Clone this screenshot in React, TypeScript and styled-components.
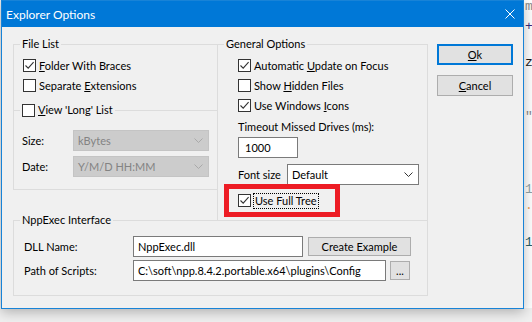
import React from "react";
import styled, { createGlobalStyle } from "styled-components";

const GlobalStyle = createGlobalStyle`
  html, body {
    margin: 0;
    padding: 0;
  }
  body {
    background: #f0f0f0;
    font-family: Lato, "Noto Sans", sans-serif;
    font-size: 11px;
    color: #000000;
  }
`;

const Backdrop = styled.div`
  width: 532px;
  height: 322px;
  overflow: hidden;
  display: flex;
  align-items: flex-start;
  padding-left: 1px;
  box-sizing: border-box;
  background: #f0f0f0;
`;

const EditorStrip = styled.div`
  position: relative;
  flex: 1;
  height: 308px;
  background: #ffffff;
  font-family: "Liberation Mono", monospace;
  font-size: 13px;
`;

const Glyph = styled.span<{ $top: number; $color: string }>`
  position: absolute;
  left: 1px;
  top: ${({ $top }) => $top}px;
  line-height: 14px;
  color: ${({ $color }) => $color};
`;

const Dialog = styled.div`
  position: relative;
  z-index: 1;
  box-sizing: border-box;
  width: 523px;
  height: 309px;
  border: 1px solid #1883d7;
  background: #f0f0f0;
  box-shadow: 0 3px 12px rgba(0, 0, 0, 0.28);
  display: flex;
  flex-direction: column;
`;

const TitleBar = styled.div`
  height: 26px;
  flex: none;
  background: #0078d7;
  color: #ffffff;
  display: flex;
  align-items: center;
  justify-content: space-between;
  padding: 0 8px 0 4px;
  font-size: 12px;
`;

const Body = styled.div`
  display: grid;
  grid-template-columns: 415px 76px;
  column-gap: 9px;
  align-items: start;
  padding: 17px 0 0 11px;
`;

const Main = styled.div`
  display: grid;
  grid-template-columns: 204px 211px;
  grid-template-rows: 176px 76px;
`;

const LeftColumn = styled.div`
  display: flex;
  flex-direction: column;
`;

const GroupBox = styled.div<{ $edges: string; $height: number }>`
  position: relative;
  box-sizing: border-box;
  height: ${({ $height }) => $height}px;
  border-style: solid;
  border-color: #dcdcdc;
  border-width: ${({ $edges }) => $edges};
`;

const Legend = styled.div`
  position: absolute;
  top: -9px;
  left: 6px;
  padding: 0 2px;
  height: 16px;
  line-height: 16px;
  background: #f0f0f0;
  display: flex;
  align-items: center;
  gap: 3px;
  white-space: nowrap;
`;

const GroupContent = styled.div<{ $pad: string }>`
  padding: ${({ $pad }) => $pad};
  display: flex;
  flex-direction: column;
`;

const CheckRow = styled.label`
  height: 20px;
  display: flex;
  align-items: center;
  gap: 3px;
  white-space: nowrap;
`;

const Box = styled.span`
  box-sizing: border-box;
  width: 13px;
  height: 13px;
  flex: none;
  border: 1px solid #333333;
  background: #ffffff;
  display: flex;
`;

const FieldGrid = styled.div<{ $cols: string; $gap: number }>`
  display: grid;
  grid-template-columns: ${({ $cols }) => $cols};
  row-gap: ${({ $gap }) => $gap}px;
  align-items: center;
`;

const Combo = styled.div<{ $disabled?: boolean }>`
  box-sizing: border-box;
  height: 21px;
  display: flex;
  align-items: center;
  justify-content: space-between;
  padding: 0 5px 0 4px;
  border: 1px solid ${({ $disabled }) => ($disabled ? "#c4c4c4" : "#7a7a7a")};
  background: ${({ $disabled }) => ($disabled ? "#cccccc" : "#ffffff")};
  color: ${({ $disabled }) => ($disabled ? "#838383" : "#000000")};
  white-space: nowrap;
`;

const TextField = styled.div<{ $width: number; $indent?: number }>`
  box-sizing: border-box;
  width: ${({ $width }) => $width}px;
  height: 21px;
  padding-left: ${({ $indent }) => $indent ?? 4}px;
  border: 1px solid #7a7a7a;
  background: #ffffff;
  display: flex;
  align-items: center;
  white-space: nowrap;
  overflow: hidden;
`;

const PushButton = styled.div<{ $width: number; $height?: number; $default?: boolean }>`
  box-sizing: border-box;
  width: ${({ $width }) => $width}px;
  height: ${({ $height }) => $height ?? 21}px;
  background: #e1e1e1;
  border: ${({ $default }) => ($default ? "2px solid #0078d7" : "1px solid #adadad")};
  display: flex;
  align-items: center;
  justify-content: center;
  white-space: nowrap;
`;

const ButtonColumn = styled.div`
  display: flex;
  flex-direction: column;
  gap: 10px;
`;

const InlineRow = styled.div<{ $gap: number }>`
  display: flex;
  align-items: center;
  gap: ${({ $gap }) => $gap}px;
`;

const Caption = styled.div<{ $width?: number }>`
  line-height: 16px;
  white-space: nowrap;
  ${({ $width }) => ($width ? `width: ${$width}px; flex: none;` : "")}
`;

const Highlight = styled.div`
  box-sizing: border-box;
  width: 116px;
  height: 33px;
  margin: -1px 0 0 -14px;
  border: 5px solid #ed1c24;
  padding-left: 9px;
  display: flex;
  align-items: center;
`;

const FocusText = styled.span`
  outline: 1px dotted #000000;
  outline-offset: 0;
  padding: 0 1px;
  line-height: 14px;
`;

function CheckMark(): JSX.Element {
  return (
    <svg width="11" height="11" viewBox="0 0 11 11">
      <path d="M1.5 5.5 L4.2 8.2 L9.6 2.2" fill="none" stroke="#333333" strokeWidth="1.1" />
    </svg>
  );
}

function CheckBox({ checked }: { checked?: boolean }): JSX.Element {
  return <Box>{checked && <CheckMark />}</Box>;
}

function Chevron({ color }: { color: string }): JSX.Element {
  return (
    <svg width="9" height="5" viewBox="0 0 9 5">
      <path d="M0.5 0.5 L4.5 4.5 L8.5 0.5" fill="none" stroke={color} strokeWidth="1" />
    </svg>
  );
}

function CloseIcon(): JSX.Element {
  return (
    <svg width="10" height="10" viewBox="0 0 10 10">
      <path d="M0.5 0.5 L9.5 9.5 M9.5 0.5 L0.5 9.5" stroke="#ffffff" strokeWidth="1" />
    </svg>
  );
}

export default function App(): JSX.Element {
  return (
    <>
      <GlobalStyle />
      <Backdrop>
        <Dialog>
          <TitleBar>
            <span>Explorer Options</span>
            <CloseIcon />
          </TitleBar>
          <Body>
            <Main>
              <LeftColumn>
                <GroupBox $edges="1px 0 0 1px" $height={66}>
                  <Legend>File List</Legend>
                  <GroupContent $pad="10px 0 0 9px">
                    <CheckRow>
                      <CheckBox checked />
                      <span>
                        <u>F</u>older With Braces
                      </span>
                    </CheckRow>
                    <CheckRow>
                      <CheckBox />
                      <span>
                        Separate <u>E</u>xtensions
                      </span>
                    </CheckRow>
                  </GroupContent>
                </GroupBox>
                <GroupBox $edges="1px 0 1px 1px" $height={80}>
                  <Legend>
                    <CheckBox />
                    <span>
                      <u>V</u>iew 'Long' List
                    </span>
                  </Legend>
                  <GroupContent $pad="19px 0 0 8px">
                    <FieldGrid $cols="51px 136px" $gap={5}>
                      <Caption>Size:</Caption>
                      <Combo $disabled>
                        <span>kBytes</span>
                        <Chevron color="#a9a9a9" />
                      </Combo>
                      <Caption>Date:</Caption>
                      <Combo $disabled>
                        <span>Y/M/D HH:MM</span>
                        <Chevron color="#a9a9a9" />
                      </Combo>
                    </FieldGrid>
                  </GroupContent>
                </GroupBox>
              </LeftColumn>

              <GroupBox $edges="1px 1px 0 1px" $height={176}>
                <Legend>General Options</Legend>
                <GroupContent $pad="10px 0 0 20px">
                  <CheckRow>
                    <CheckBox checked />
                    <span>
                      Automatic <u>U</u>pdate on Focus
                    </span>
                  </CheckRow>
                  <CheckRow>
                    <CheckBox />
                    <span>
                      Show <u>H</u>idden Files
                    </span>
                  </CheckRow>
                  <CheckRow>
                    <CheckBox checked />
                    <span>
                      Use Windows <u>I</u>cons
                    </span>
                  </CheckRow>
                  <Caption style={{ marginTop: 4 }}>Timeout Missed Drives (ms):</Caption>
                  <TextField $width={60} $indent={6} style={{ marginTop: 2 }}>
                    1000
                  </TextField>
                  <InlineRow $gap={0} style={{ marginTop: 6 }}>
                    <Caption $width={49}>Font size</Caption>
                    <Combo style={{ width: 132 }}>
                      <span>Default</span>
                      <Chevron color="#333333" />
                    </Combo>
                  </InlineRow>
                  <Highlight>
                    <CheckRow>
                      <CheckBox checked />
                      <FocusText>Use Full Tree</FocusText>
                    </CheckRow>
                  </Highlight>
                </GroupContent>
              </GroupBox>

              <GroupBox $edges="1px" $height={76} style={{ gridColumn: "1 / span 2" }}>
                <Legend>NppExec Interface</Legend>
                <GroupContent $pad="15px 0 0 10px">
                  <FieldGrid $cols="109px auto" $gap={3}>
                    <Caption>DLL Name:</Caption>
                    <InlineRow $gap={5}>
                      <TextField $width={170}>NppExec.dll</TextField>
                      <PushButton $width={103} $height={19}>
                        Create Example
                      </PushButton>
                    </InlineRow>
                    <Caption>Path of Scripts:</Caption>
                    <InlineRow $gap={4}>
                      <TextField $width={253}>C:\soft\npp.8.4.2.portable.x64\plugins\Config</TextField>
                      <PushButton $width={20} $height={19}>
                        ...
                      </PushButton>
                    </InlineRow>
                  </FieldGrid>
                </GroupContent>
              </GroupBox>
            </Main>

            <ButtonColumn>
              <PushButton $width={76} $default>
                <span>
                  <u>O</u>k
                </span>
              </PushButton>
              <PushButton $width={76}>
                <span>
                  <u>C</u>ancel
                </span>
              </PushButton>
            </ButtonColumn>
          </Body>
        </Dialog>
        <EditorStrip>
          <Glyph $top={0} $color="#8a8a8a">m</Glyph>
          <Glyph $top={20} $color="#3a2a7a">+</Glyph>
          <Glyph $top={56} $color="#1a1a1a">z</Glyph>
          <Glyph $top={110} $color="#8a8a8a">"</Glyph>
          <Glyph $top={183} $color="#8fa3a8">1</Glyph>
          <Glyph $top={199} $color="#f0a050">.</Glyph>
          <Glyph $top={236} $color="#2b5f66">1</Glyph>
        </EditorStrip>
      </Backdrop>
    </>
  );
}
